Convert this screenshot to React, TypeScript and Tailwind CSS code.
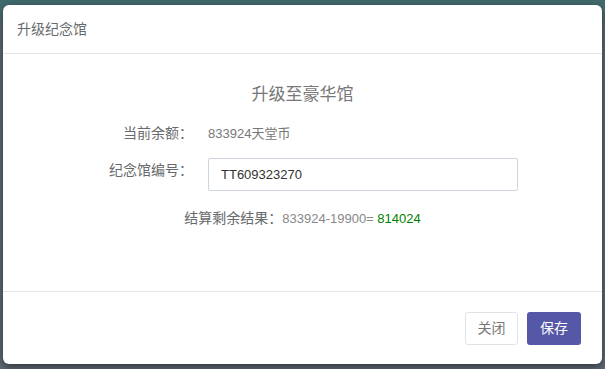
export default function App() {
  return (
    <div
      className="w-[605px] h-[369px] bg-gradient-to-b from-[#3f6a6c] from-0% via-[#5b6b76] via-[8%] to-[#5f6975] pt-[5px] px-[3px] overflow-hidden"
      style={{ fontFamily: '"Liberation Sans", "Noto Sans CJK SC", sans-serif' }}
    >
      <div className="w-[599px] h-[359px] bg-white rounded-[6px] shadow-[0_3px_9px_rgba(0,0,0,0.5)] flex flex-col">
        <div className="h-[49px] flex items-center px-[14px] border-b border-[#e5e5e5] shrink-0">
          <h4 className="text-[14px] text-[#676a6c]">升级纪念馆</h4>
        </div>

        <div className="flex-1 flex flex-col items-center pt-[32px]">
          <h3 className="text-[17px] text-[#777] leading-none">升级至豪华馆</h3>

          <div className="w-full mt-[20px] flex items-center">
            <span className="w-[190px] text-right text-[14px] text-[#676a6c]">当前余额：</span>
            <span className="ml-[15px] text-[13px] text-[#777]">833924天堂币</span>
          </div>

          <div className="w-full mt-[14px] flex items-center">
            <span className="w-[190px] text-right text-[14px] text-[#676a6c] self-start pt-[2px]">纪念馆编号：</span>
            <input
              className="ml-[15px] w-[310px] h-[33px] border border-[#cfd5dc] rounded-[2px] px-[12px] text-[13px] text-[#333] outline-none"
              defaultValue="TT609323270"
            />
          </div>

          <div className="mt-[17px] text-[14px] text-[#676a6c]">
            结算剩余结果：<span className="text-[13px] text-[#888]">833924-19900= </span>
            <span className="text-[13px] text-[#008000]">814024</span>
          </div>
        </div>

        <div className="h-[73px] border-t border-[#e5e5e5] flex items-center justify-end gap-[9px] px-[21px] shrink-0">
          <button className="w-[53px] h-[33px] border border-[#e0e4e8] rounded-[3px] bg-white text-[14px] text-[#777]">
            关闭
          </button>
          <button className="w-[54px] h-[33px] rounded-[3px] bg-[#5558a6] text-[14px] text-white">保存</button>
        </div>
      </div>
    </div>
  );
}
